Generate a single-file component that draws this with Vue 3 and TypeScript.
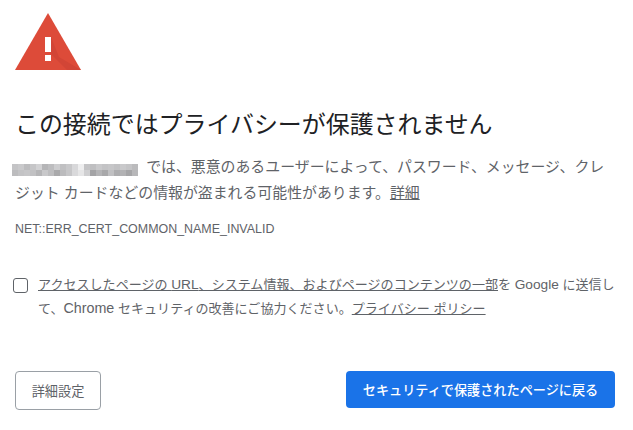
<script setup lang="ts">
const shades: string[] = [
  '#c4c4c6','#c9c9cb','#bcbcbe','#c6c6c8','#d2d2d4','#b5b5b7','#bdbdbf','#cdcdcf','#c0c0c2','#c8c8ca','#d8d8da','#eeeeef','#c4c4c6','#bfbfc1','#c9c9cb','#c3c3c5','#c6c6c8','#c1c1c3','#c9c9cb','#c4c4c6','#bbbbbd',
  '#bcbcbe','#c3c3c5','#c6c6c8','#c1c1c3','#b5b5b7','#c8c8ca','#bdbdbf','#a9a9ab','#bbbbbd','#c6c6c8','#d9d9db','#e6e6e7','#cfcfd1','#a4a4a6','#b4b4b6','#a8a8aa','#c0c0c2','#adadaf','#b2b2b4','#a5a5a7','#b7b7b9',
]
</script>

<template>
  <main class="page">
    <svg class="warn" viewBox="0 0 66 57" width="66" height="57" aria-hidden="true">
      <polygon points="33,0 66,57 0,57" fill="#dd4b39" />
      <polygon points="36,38 36,41 52,57 66,57 44,44 36,24" fill="#d24536" />
      <rect x="30" y="24" width="6" height="15" fill="#fff" />
      <rect x="30" y="42" width="6" height="6" fill="#fff" />
    </svg>

    <h1 class="title">この接続ではプライバシーが保護されません</h1>

    <p class="message">
      <span class="blur" aria-hidden="true"><i v-for="(c, n) in shades" :key="n" :style="{ background: c }"></i></span>
      では、悪意のあるユーザーによって、パスワード、メッセージ、クレジット カードなどの情報が盗まれる可能性があります。<a class="link">詳細</a>
    </p>

    <p class="code">NET::ERR_CERT_COMMON_NAME_INVALID</p>

    <div class="opt">
      <span class="box"></span>
      <p class="opt-text"><a class="link">アクセスしたページの <span class="latin">URL</span>、システム情報、およびページのコンテンツの一部</a>を <span class="latin">Google</span> に送信して、<span class="chrome">Chrome</span> セキュリティの改善にご協力ください。<a class="link">プライバシー ポリシー</a></p>
    </div>

    <div class="actions">
      <button class="btn ghost">詳細設定</button>
      <button class="btn primary">セキュリティで保護されたページに戻る</button>
    </div>
  </main>
</template>

<style>
html, body { background: #fff; }
</style>

<style scoped>
.page {
  width: 633px;
  height: 430px;
  box-sizing: border-box;
  padding: 13px 18px 0 15px;
  font-family: "Liberation Sans", "Noto Sans CJK JP", sans-serif;
  color: #5f6368;
  overflow: hidden;
}
.warn { display: block; }
.title {
  margin: 38px 0 0;
  font-size: 23.95px;
  line-height: 34px;
  font-weight: 400;
  color: #202124;
}
.message {
  margin: 12px 0 0;
  width: 596px;
  font-size: 14.9px;
  line-height: 26px;
}
.blur {
  display: inline-grid;
  grid-template-columns: repeat(21, 6px);
  grid-auto-rows: 6px;
  vertical-align: 2px;
  margin: 0 4px 0 -3px;
}
.link { color: #5f6368; text-decoration: underline; }
.code {
  margin: 13px 0 0;
  font-size: 12.45px;
  line-height: 20px;
}
.opt {
  display: flex;
  gap: 10px;
  margin-top: 34px;
  margin-left: -2px;
}
.box {
  flex: none;
  width: 13px;
  height: 13px;
  margin-top: 5px;
  border: 1px solid #5f6368;
  border-radius: 3px;
}
.opt-text {
  margin: 0;
  font-size: 13.05px;
  line-height: 24px;
  width: 578px;
}
.latin { font-size: 13.7px; line-height: 1; }
.chrome { font-size: 14.3px; line-height: 1; }
.actions {
  display: flex;
  justify-content: space-between;
  align-items: flex-start;
  margin-top: 50px;
}
.btn {
  height: 39px;
  border-radius: 4px;
  font: inherit;
  font-size: 13.2px;
}
.ghost {
  width: 86px;
  background: #fff;
  border: 1px solid #9aa0a6;
  color: #5f6368;
}
.primary {
  width: 269px;
  height: 37px;
  background: #1a73e8;
  border: none;
  color: #fff;
  font-size: 13.15px;
  font-weight: 500;
}
</style>
